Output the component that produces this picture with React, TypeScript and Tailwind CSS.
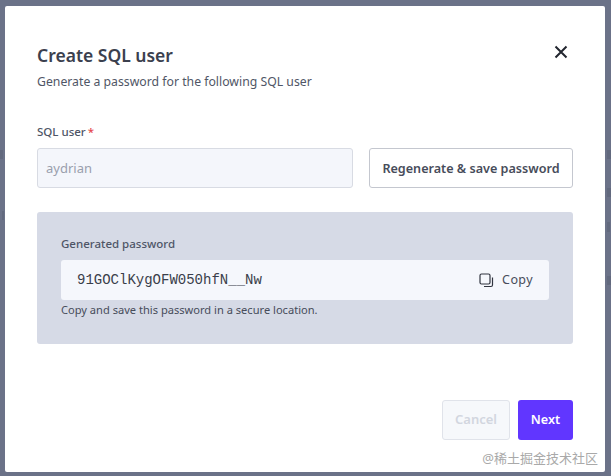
import React from "react";

const font = { fontFamily: '"Noto Sans", "Noto Sans CJK SC", sans-serif' };

const smudges = [
  "left-0 top-[150px] h-[9px] w-[3px]",
  "left-[2px] top-[211px] h-[9px] w-[2px]",
  "left-[607px] top-[150px] h-[9px] w-[4px]",
  "left-[607px] top-[188px] h-[9px] w-[4px]",
  "left-[607px] top-[222px] h-[10px] w-[3px]",
  "left-[607px] top-[276px] h-[9px] w-[4px]",
];

export default function App() {
  return (
    <div className="relative h-[476px] w-[611px] overflow-hidden bg-[#6b7288] pt-[6px] pl-[5px]" style={font}>
      {smudges.map((s, i) => (
        <div key={i} className={`absolute bg-[#62697e] ${s}`} />
      ))}
      <div className="relative flex h-[466px] w-[600px] flex-col rounded-[2px] bg-white px-[32px] pt-[36px]">
        <div className="flex items-start justify-between">
          <div>
            <h1 className="text-[17.5px] leading-[26px] font-semibold text-[#3b404e]">Create SQL user</h1>
            <p className="mt-[5px] text-[12.25px] leading-[18px] text-[#505666]">Generate a password for the following SQL user</p>
          </div>
          <svg className="mt-[3px] mr-[5px]" width="14" height="14" viewBox="0 0 14 14" fill="none" stroke="#22262f" strokeWidth="2">
            <path d="M1.5 1.5 12.5 12.5M12.5 1.5 1.5 12.5" />
          </svg>
        </div>
        <div className="mt-[33px] text-[11.5px] leading-[16px] font-medium text-[#4e5566]">
          SQL user<span className="ml-[2px] text-[#e5484d]">*</span>
        </div>
        <div className="mt-[8px] flex gap-[16px]">
          <div className="flex h-[40px] w-[316px] items-center rounded-[3px] border border-[#d8dbe3] bg-[#f4f6fb] px-[8px] pt-[2px] text-[13px] text-[#9a9fad]">aydrian</div>
          <div className="flex h-[40px] w-[204px] items-center justify-center rounded-[3px] border border-[#c4c7cf] bg-white pt-[2px] text-[12.6px] font-semibold text-[#474c5a]">Regenerate &amp; save password</div>
        </div>
        <div className="mt-[24px] h-[132px] w-[536px] rounded-[3px] bg-[#d6dae6] px-[24px] pt-[24px]">
          <div className="text-[11.5px] leading-[16px] font-medium text-[#4e5566]">Generated password</div>
          <div className="mt-[8px] flex h-[40px] items-center justify-between rounded-[3px] bg-[#f5f7fc] pr-[16px] pl-[16px]">
            <span className="text-[14px] text-[#3a3e4a]" style={{ fontFamily: '"Liberation Mono", monospace' }}>91GOClKygOFW050hfN__Nw</span>
            <div className="flex items-center gap-[8px] text-[12.5px] tracking-[0.4px] text-[#474c5a]">
              <svg width="15" height="15" viewBox="0 0 15 15" fill="none" stroke="#30343f" strokeWidth="1.2">
                <rect x="1" y="1" width="10" height="10" rx="1.5" />
                <path d="M13.5 4.5v7.5a1.5 1.5 0 0 1-1.5 1.5H5" />
              </svg>
              Copy
            </div>
          </div>
          <p className="mt-[2px] text-[11.1px] leading-[16px] text-[#474c5a]">Copy and save this password in a secure location.</p>
        </div>
        <div className="mt-auto mb-[32px] flex justify-end gap-[8px]">
          <div className="flex h-[40px] w-[68px] items-center justify-center rounded-[3px] border border-[#e0e3ea] bg-[#f6f8fb] text-[13px] font-semibold text-[#d2d6df]">Cancel</div>
          <div className="flex h-[40px] w-[55px] items-center justify-center rounded-[3px] bg-[#6136ff] text-[12.6px] font-semibold text-white">Next</div>
        </div>
        <div className="absolute right-[7px] bottom-[5px] text-[13px] leading-[18px] text-[#a9a9a9]">@稀土掘金技术社区</div>
      </div>
    </div>
  );
}
